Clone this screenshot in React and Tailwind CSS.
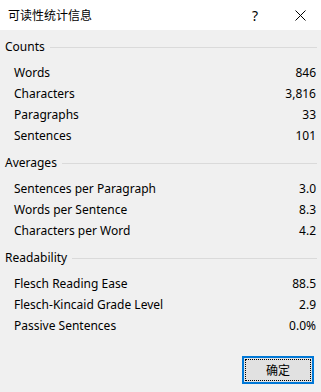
import React from 'react';

const sections = [
  {
    title: 'Counts',
    rows: [
      ['Words', '846'],
      ['Characters', '3,816'],
      ['Paragraphs', '33'],
      ['Sentences', '101'],
    ],
  },
  {
    title: 'Averages',
    rows: [
      ['Sentences per Paragraph', '3.0'],
      ['Words per Sentence', '8.3'],
      ['Characters per Word', '4.2'],
    ],
  },
  {
    title: 'Readability',
    rows: [
      ['Flesch Reading Ease', '88.5'],
      ['Flesch-Kincaid Grade Level', '2.9'],
      ['Passive Sentences', '0.0%'],
    ],
  },
];

function Section({ title, rows, first }) {
  return (
    <div className={first ? '' : 'mt-[6px]'}>
      <div className="h-[21px] flex items-center pl-[5px] pr-[4px]">
        <span>{title}</span>
        <div className="flex-1 h-px bg-[#dadada] ml-[5px] mt-[2px]" />
      </div>
      <div className="mt-[5px]">
        {rows.map(([label, value]) => (
          <div key={label} className="h-[21px] flex items-center justify-between pl-[14px] pr-[5px]">
            <span>{label}</span>
            <span>{value}</span>
          </div>
        ))}
      </div>
    </div>
  );
}

export default function App() {
  return (
    <div
      className="w-[321px] h-[392px] bg-[#f0f0f0] text-black text-[12px] overflow-hidden"
      style={{ fontFamily: '"Noto Sans", "Noto Sans CJK SC", sans-serif' }}
    >
      {/* Title bar */}
      <div className="h-[30px] bg-white flex items-center pl-[8px] pr-[11px]">
        <span className="flex-1" style={{ fontFamily: '"Noto Sans CJK SC", sans-serif' }}>可读性统计信息</span>
        <span className="w-[20px] text-center text-[14px]">?</span>
        <div className="w-[20px] ml-[25px] flex justify-center">
          <svg width="11" height="11" viewBox="0 0 11 11">
            <path d="M0.5 0.5 L10.5 10.5 M10.5 0.5 L0.5 10.5" stroke="#000" strokeWidth="1" />
          </svg>
        </div>
      </div>

      {/* Body */}
      <div className="pt-[6px]">
        {sections.map((s, i) => (
          <Section key={s.title} {...s} first={i === 0} />
        ))}
      </div>

      <div className="flex justify-end pr-[7px] mt-[20px]">
        <button className="w-[72px] h-[28px] border-2 border-[#0078d7] bg-[#e1e1e1] p-[1px]">
          <div
            className="w-full h-full border border-dotted border-black flex items-center justify-center"
            style={{ fontFamily: '"Noto Sans CJK SC", sans-serif' }}
          >
            确定
          </div>
        </button>
      </div>
    </div>
  );
}
